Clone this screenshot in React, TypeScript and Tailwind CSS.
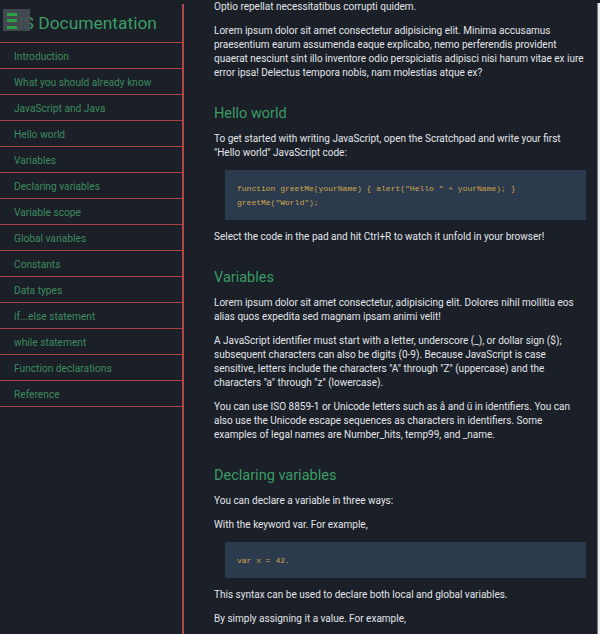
import React from "react";

const navItems = [
  "Introduction",
  "What you should already know",
  "JavaScript and Java",
  "Hello world",
  "Variables",
  "Declaring variables",
  "Variable scope",
  "Global variables",
  "Constants",
  "Data types",
  "if...else statement",
  "while statement",
  "Function declarations",
  "Reference",
];

const pClass = "mb-[10px]";
const hClass = "mt-[23px] mb-[8px] text-[14.5px] leading-[21px] text-[#3c9c63]";
const codeClass =
  "ml-[11px] mb-[10px] pt-[12px] pb-[10px] pl-[12px] bg-[#2c3a4d] text-[8px] leading-[14px] text-[#d0a64c] font-['Liberation_Mono',monospace] whitespace-pre";

const NavBar: React.FC = () => (
  <nav className="w-[184px] shrink-0 mt-1 border-r-2 border-[#b04646]">
    {/* Header */}
    <header className="relative h-[39px] border-b border-[#a84444] flex items-center pl-[14px]">
      <h1 className="text-[17.4px] text-[#3c9c63]">JS Documentation</h1>
      <button className="absolute left-[3px] top-[5px] w-[27px] h-[22px] bg-[#474c54]/90 flex flex-col gap-[3.5px] pt-[3.5px] pl-[4px]">
        <span className="block w-[10px] h-[3px] bg-[#2ea043]" />
        <span className="block w-[10px] h-[3px] bg-[#2ea043]" />
        <span className="block w-[10px] h-[3px] bg-[#2ea043]" />
      </button>
    </header>

    {/* Links */}
    <ul>
      {navItems.map((item) => (
        <li key={item} className="h-[26px] border-b border-[#a84444] flex items-center pl-[14px] pt-[2px]">
          <a href="#" className="text-[10.2px] text-[#3e8b5d]">
            {item}
          </a>
        </li>
      ))}
    </ul>
  </nav>
);

const App: React.FC = () => {
  return (
    <div className="h-[634px] overflow-hidden flex bg-[#1a1f28] font-['Roboto',sans-serif]">
      <NavBar />

      {/* Main content */}
      <main className="flex-1 pl-[30px] pr-[11px] text-[10px] leading-[14px] text-[#e3e5e8]">
        <p className={pClass}>Optio repellat necessitatibus corrupti quidem.</p>
        <p className={pClass}>
          Lorem ipsum dolor sit amet consectetur adipisicing elit. Minima accusamus praesentium earum assumenda eaque
          explicabo, nemo perferendis provident quaerat nesciunt sint illo inventore odio perspiciatis adipisci nisi
          harum vitae ex iure error ipsa! Delectus tempora nobis, nam molestias atque ex?
        </p>

        <h2 className={hClass}>Hello world</h2>
        <p className={pClass}>
          To get started with writing JavaScript, open the Scratchpad and write your first "Hello world" JavaScript
          code:
        </p>
        <pre className={codeClass}>
          {'function greetMe(yourName) { alert("Hello " + yourName); }\ngreetMe("World");'}
        </pre>
        <p className={pClass}>Select the code in the pad and hit Ctrl+R to watch it unfold in your browser!</p>

        <h2 className={hClass}>Variables</h2>
        <p className={pClass}>
          Lorem ipsum dolor sit amet consectetur, adipisicing elit. Dolores nihil mollitia eos alias quos expedita sed
          magnam ipsam animi velit!
        </p>
        <p className={pClass}>
          A JavaScript identifier must start with a letter, underscore (_), or dollar sign ($); subsequent characters
          can also be digits (0-9). Because JavaScript is case sensitive, letters include the characters "A" through
          "Z" (uppercase) and the characters "a" through "z" (lowercase).
        </p>
        <p className={pClass}>
          You can use ISO 8859-1 or Unicode letters such as å and ü in identifiers. You can also use the Unicode escape
          sequences as characters in identifiers. Some examples of legal names are Number_hits, temp99, and _name.
        </p>

        <h2 className={hClass}>Declaring variables</h2>
        <p className={pClass}>You can declare a variable in three ways:</p>
        <p className={pClass}>With the keyword var. For example,</p>
        <pre className={codeClass}>var x = 42.</pre>
        <p className={pClass}>This syntax can be used to declare both local and global variables.</p>
        <p className={pClass}>By simply assigning it a value. For example,</p>
      </main>

      {/* Window edge */}
      <div className="w-px shrink-0 mt-[3px] bg-[#7a7d82]" />
      <div className="w-[2px] shrink-0 mt-[3px] bg-[#eceef0]" />
    </div>
  );
};

export default App;
